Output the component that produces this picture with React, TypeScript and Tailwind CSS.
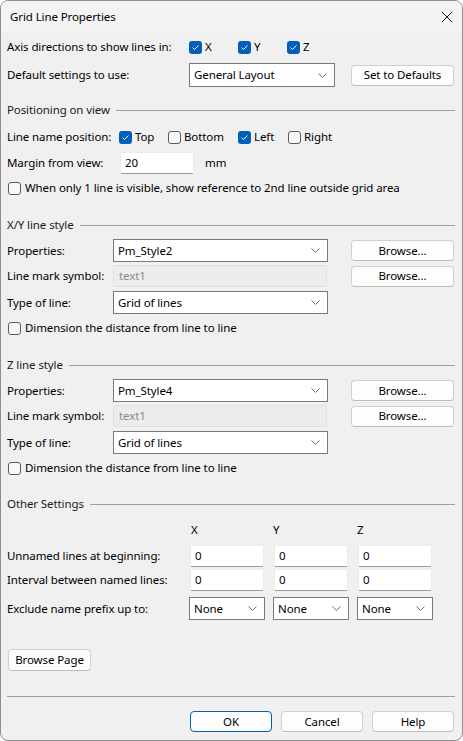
import React from "react";

const font = { fontFamily: '"Noto Sans", "Segoe UI", sans-serif' };

function Cb({ checked }: { checked?: boolean }) {
  if (checked) {
    return (
      <span className="w-[13px] h-[13px] rounded-[3px] bg-[#005fb8] flex items-center justify-center shrink-0">
        <svg width="9" height="9" viewBox="0 0 9 9">
          <path d="M1.6 4.7 L3.6 6.5 L7.4 2.5" stroke="white" strokeWidth="1" fill="none" />
        </svg>
      </span>
    );
  }
  return <span className="w-[13px] h-[13px] rounded-[3px] border border-[#5c5c5c] bg-[#f8f8f8] shrink-0" />;
}

function Chevron() {
  return (
    <svg width="9" height="5" viewBox="0 0 9 5" className="shrink-0">
      <path d="M0.5 0.5 L4.5 4.5 L8.5 0.5" stroke="#707070" strokeWidth="1" fill="none" />
    </svg>
  );
}

function Select({ value, w, h = 23 }: { value: string; w: string; h?: number }) {
  return (
    <div
      className={`${w} ${h === 24 ? "h-[24px]" : "h-[23px]"} border border-[#7a7a7a] bg-white flex items-center justify-between pl-[4px] pr-[7px] shrink-0`}
    >
      <span>{value}</span>
      <Chevron />
    </div>
  );
}

function Input({ value, w }: { value: string; w: string }) {
  return (
    <div className={`${w} h-[22px] bg-white border border-[#ececec] border-b-[#9a9a9a] rounded-[2px] flex items-center pl-[4px] shrink-0`}>
      {value}
    </div>
  );
}

function Btn({ label, w = "w-[103px]", primary }: { label: string; w?: string; primary?: boolean }) {
  return (
    <div
      className={`${w} h-[21px] rounded-[4px] bg-[#fdfdfd] border ${
        primary ? "border-[#005fb8]" : "border-[#d0d0d0] border-b-[#bcbcbc]"
      } flex items-center justify-center shrink-0`}
    >
      {label}
    </div>
  );
}

function Header({ label, mt }: { label: string; mt: string }) {
  return (
    <div className={`${mt} h-[22px] flex items-center`}>
      <span className="text-[#1a1a1a]">{label}</span>
      <div className="flex-1 h-px bg-[#a0a0a0] ml-[6px]" />
    </div>
  );
}

function CbLabel({ checked, label, w, gap = "gap-[3px]" }: { checked?: boolean; label: string; w?: string; gap?: string }) {
  return (
    <div className={`${w ?? ""} flex items-center ${gap} shrink-0`}>
      <Cb checked={checked} />
      <span>{label}</span>
    </div>
  );
}

function StyleSection({ title, style, mt }: { title: string; style: string; mt: string }) {
  return (
    <>
      <Header label={title} mt={mt} />
      <div className="mt-[3px] h-[23px] flex items-center">
        <span className="w-[106px] shrink-0">Properties:</span>
        <Select value={style} w="w-[215px]" />
        <div className="ml-[23px]">
          <Btn label="Browse..." />
        </div>
      </div>
      <div className="mt-[3px] h-[22px] flex items-center">
        <span className="w-[106px] shrink-0">Line mark symbol:</span>
        <div className="w-[214px] h-[22px] bg-[#ececec] border border-[#e0e0e0] rounded-[2px] flex items-center pl-[5px] text-[#8a8a8a] shrink-0">
          text1
        </div>
        <div className="ml-[24px]">
          <Btn label="Browse..." />
        </div>
      </div>
      <div className="mt-[4px] h-[23px] flex items-center">
        <span className="w-[106px] shrink-0">Type of line:</span>
        <Select value="Grid of lines" w="w-[215px]" />
      </div>
      <div className="mt-[3px] h-[22px] flex items-center pl-[1px]">
        <CbLabel label="Dimension the distance from line to line" gap="gap-[4px]" />
      </div>
    </>
  );
}

export default function App() {
  return (
    <div
      className="w-[463px] h-[741px] border border-[#8f8f8f] rounded-[8px] overflow-hidden bg-[#f0f0f0] text-[11.5px] tracking-[-0.1px] text-black leading-none"
      style={font}
    >
      <div className="h-[31px] bg-[#f3f3f3] flex items-center justify-between pl-[9px] pr-[9px]">
        <span>Grid Line Properties</span>
        <svg width="12" height="12" viewBox="0 0 12 12">
          <path d="M0.8 0.8 L11.2 11.2 M11.2 0.8 L0.8 11.2" stroke="#1a1a1a" strokeWidth="1" fill="none" />
        </svg>
      </div>
      <div className="pl-[6px] pr-[7px] flex flex-col">
        <div className="mt-[3px] h-[24px] flex items-center">
          <span className="w-[182px] shrink-0">Axis directions to show lines in:</span>
          <CbLabel checked label="X" w="w-[49px]" />
          <CbLabel checked label="Y" w="w-[49px]" />
          <CbLabel checked label="Z" w="w-[49px]" />
        </div>
        <div className="mt-[4px] h-[24px] flex items-center">
          <span className="w-[182px] shrink-0">Default settings to use:</span>
          <Select value="General Layout" w="w-[146px]" h={24} />
          <div className="ml-[16px]">
            <Btn label="Set to Defaults" />
          </div>
        </div>

        <Header label="Positioning on view" mt="mt-[12px]" />
        <div className="mt-[5px] h-[22px] flex items-center">
          <span className="w-[112px] shrink-0">Line name position:</span>
          <CbLabel checked label="Top" w="w-[49px]" />
          <CbLabel label="Bottom" w="w-[70px]" />
          <CbLabel checked label="Left" w="w-[50px]" />
          <CbLabel label="Right" />
        </div>
        <div className="mt-[4px] h-[22px] flex items-center">
          <span className="w-[113px] shrink-0">Margin from view:</span>
          <Input value="20" w="w-[74px]" />
          <span className="ml-[11px]">mm</span>
        </div>
        <div className="mt-[3px] h-[22px] flex items-center pl-[1px]">
          <CbLabel label="When only 1 line is visible, show reference to 2nd line outside grid area" gap="gap-[4px]" />
        </div>

        <StyleSection title="X/Y line style" style="Pm_Style2" mt="mt-[15px]" />
        <StyleSection title="Z line style" style="Pm_Style4" mt="mt-[15px]" />

        <Header label="Other Settings" mt="mt-[14px]" />
        <div className="mt-[4px] h-[22px] flex items-center">
          <span className="w-[184px] shrink-0" />
          <span className="w-[82px] shrink-0">X</span>
          <span className="w-[84px] shrink-0">Y</span>
          <span>Z</span>
        </div>
        <div className="mt-[3px] h-[23px] flex items-center">
          <span className="w-[183px] shrink-0">Unnamed lines at beginning:</span>
          <Input value="0" w="w-[74px]" />
          <div className="ml-[10px]"><Input value="0" w="w-[74px]" /></div>
          <div className="ml-[10px]"><Input value="0" w="w-[74px]" /></div>
        </div>
        <div className="mt-[2px] h-[22px] flex items-center">
          <span className="w-[183px] shrink-0">Interval between named lines:</span>
          <Input value="0" w="w-[74px]" />
          <div className="ml-[10px]"><Input value="0" w="w-[74px]" /></div>
          <div className="ml-[10px]"><Input value="0" w="w-[74px]" /></div>
        </div>
        <div className="mt-[6px] h-[23px] flex items-center">
          <span className="w-[182px] shrink-0">Exclude name prefix up to:</span>
          <Select value="None" w="w-[76px]" />
          <div className="ml-[8px]"><Select value="None" w="w-[76px]" /></div>
          <div className="ml-[8px]"><Select value="None" w="w-[76px]" /></div>
        </div>

        <div className="mt-[29px] h-[22px] flex items-center pl-[1px]">
          <div className="w-[83px] h-[22px] rounded-[4px] bg-[#fdfdfd] border border-[#d0d0d0] border-b-[#bcbcbc] flex items-center justify-center">
            Browse Page
          </div>
        </div>

        <div className="mt-[25px] h-px bg-[#a0a0a0]" />

        <div className="mt-[14px] h-[21px] flex items-center justify-end gap-[9px] pr-[1px]">
          <Btn label="OK" w="w-[82px]" primary />
          <Btn label="Cancel" w="w-[82px]" />
          <Btn label="Help" w="w-[82px]" />
        </div>
      </div>
    </div>
  );
}
